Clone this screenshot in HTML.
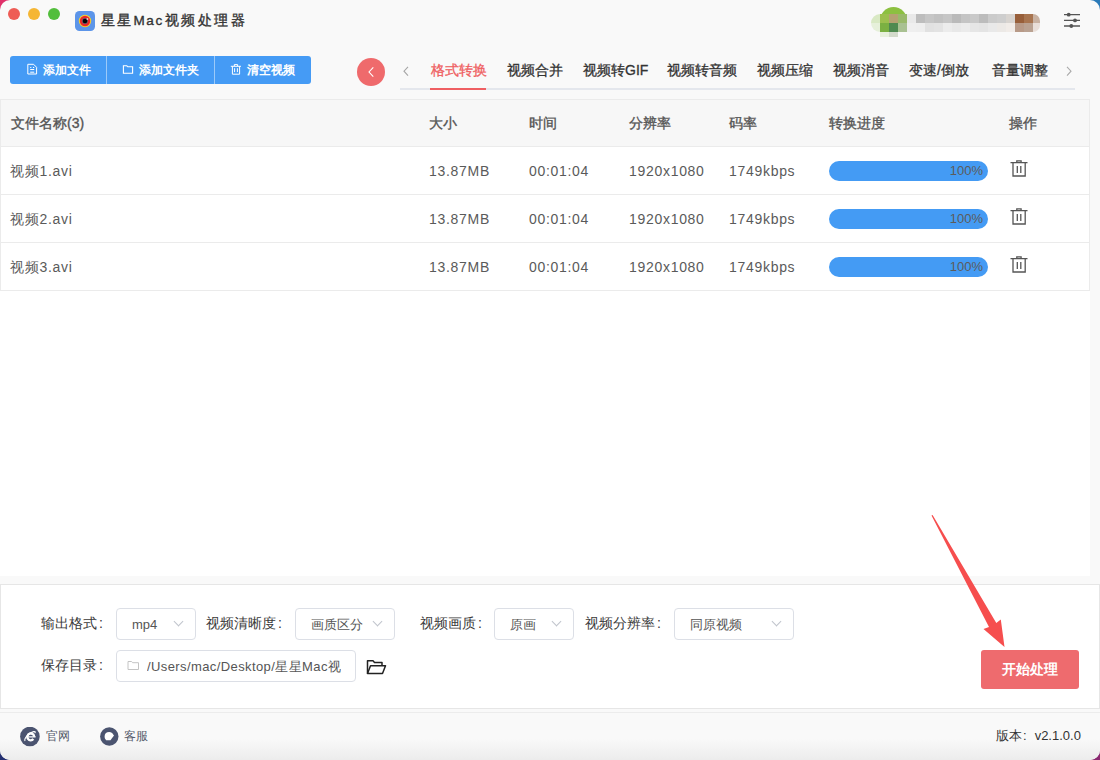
<!DOCTYPE html>
<html><head><meta charset="utf-8">
<style>
*{box-sizing:border-box;margin:0;padding:0}
html,body{width:1100px;height:760px;overflow:hidden}
body{font-family:"Liberation Sans",sans-serif;color:#333;position:relative;background:#fff}
.corner{position:absolute;width:20px;height:20px}
.win{position:absolute;left:0;top:0;width:1100px;height:760px;background:#f9f9f9;border-radius:10px;overflow:hidden}
.abs{position:absolute}
.tl{position:absolute;top:8px;width:12px;height:12px;border-radius:50%}
.title{position:absolute;left:100.5px;top:11px;font-size:13.5px;color:#333;letter-spacing:2.5px;line-height:20px;-webkit-text-stroke:0.35px #333}
.btns{position:absolute;left:10px;top:56px;width:301px;height:28px;background:#459bf5;border-radius:3px;color:#fff;font-size:12px;font-weight:bold}
.btns .sep{position:absolute;top:0;width:1px;height:28px;background:#9ccaf9}
.btns .t{position:absolute;top:0;line-height:28px}
.btns svg{position:absolute}
.tabs{position:absolute;top:60px;font-size:14px;line-height:20px;color:#333;-webkit-text-stroke:0.3px #333}
.tabline{position:absolute;left:400px;top:88px;width:675px;height:2px;background:#e4e7ed}
.main{position:absolute;left:0;top:99px;width:1090px;height:477px;background:#fff}
.table{position:absolute;left:0;top:99px;width:1090px;height:192px;border:1px solid #ebebeb}
.hdr{position:absolute;left:0;top:0;width:1088px;height:47px;background:#f7f7f7;border-bottom:1px solid #ebebeb}
.row{position:absolute;left:0;width:1088px;height:48px;border-bottom:1px solid #ebebeb;background:#fff}
.cell{position:absolute;font-size:14px;line-height:20px;color:#5a5a5a}
.hdr .cell{color:#555;top:13px;-webkit-text-stroke:0.35px #555}
.row .cell{top:14px;letter-spacing:0.7px}
.bar{position:absolute;left:828px;top:14px;width:159px;height:20px;border-radius:10px;background:#449bf4;color:#5c5c5c;font-size:13px;line-height:20px;text-align:right;padding-right:5px}
.trash{position:absolute;left:1009px;top:11px}
.panel{position:absolute;left:0;top:584px;width:1100px;height:125px;background:#fff;border:1px solid #e6e6e6}
.lbl{position:absolute;font-size:14px;color:#3a3a3a;line-height:20px}
.lbl b{font-weight:normal;display:inline-block;margin-left:2px}
.sel{position:absolute;height:32px;border:1px solid #dcdfe6;border-radius:4px;background:#fff;font-size:13px;color:#555;line-height:31px;white-space:nowrap;overflow:hidden}
.chev{position:absolute;top:9px;width:7px;height:7px;border-right:1px solid #c0c4cc;border-bottom:1px solid #c0c4cc;transform:rotate(45deg)}
.footer{position:absolute;left:0;top:712px;width:1100px;height:48px;background:linear-gradient(#f9f9f9,#f9f9f9 55%,#ececec);border-top:1px solid #ececec}
.start{position:absolute;left:981px;top:650px;width:98px;height:39px;background:#ee6b6e;border-radius:3px;color:#fff;font-size:14px;font-weight:bold;text-align:center;line-height:39px}
.mz{position:absolute;width:9px;height:9px}
</style></head><body>
<div class="corner" style="left:0;top:0;background:#e0306a"></div>
<div class="corner" style="right:0;top:0;background:#2a7ab8"></div>
<div class="corner" style="left:0;bottom:0;background:#243070"></div>
<div class="corner" style="right:0;bottom:0;background:#8a2870"></div>
<div class="win">
  <div class="tl" style="left:8px;background:#ee5c55"></div>
  <div class="tl" style="left:28px;background:#f5b634"></div>
  <div class="tl" style="left:48px;background:#52be3c"></div>
  <!-- app icon -->
  <svg class="abs" style="left:75px;top:11px" width="20" height="20" viewBox="0 0 20 20">
    <rect x="0" y="0" width="20" height="20" rx="4.5" fill="#5c95e9"/>
    <circle cx="10" cy="10" r="6.2" fill="#f3d22b"/>
    <circle cx="10" cy="10" r="5.2" fill="#e8262a"/>
    <circle cx="10" cy="10" r="2.9" fill="#5a6070"/>
    <circle cx="10" cy="10" r="2.3" fill="#050505"/>
    <circle cx="12.4" cy="8" r="0.9" fill="#f4c8c8"/>
  </svg>
  <div class="title">星星<span style="letter-spacing:1.6px">Ma</span>c视频处理器</div>

  <!-- mosaic avatar -->
  <div class="abs" style="left:871px;top:7px;width:170px;height:32px;overflow:visible">
    <div class="abs" style="left:9px;top:0;width:27px;height:14px;border-radius:14px 14px 0 0;background:#8cc040"></div>
    <div class="abs" style="left:0;top:7px;width:18px;height:18px;border-radius:9px 0 0 9px;overflow:hidden">
      <div class="abs" style="left:0;top:0;width:9px;height:9px;background:#d9e9c4"></div>
      <div class="abs" style="left:0;top:9px;width:9px;height:9px;background:#e6f0da"></div>
    </div>
  </div>
  <div class="mz" style="left:880px;top:14px;background:#9cbf4e"></div>
  <div class="mz" style="left:889px;top:14px;background:#b4a272"></div>
  <div class="mz" style="left:898px;top:14px;background:#99b96a"></div>
  <div class="mz" style="left:907px;top:14px;background:#e9e9e9"></div>
  <div class="mz" style="left:916px;top:14px;background:#bdbdbd"></div>
  <div class="mz" style="left:925px;top:14px;background:#c6c6c6"></div>
  <div class="mz" style="left:934px;top:14px;background:#c1c1c1"></div>
  <div class="mz" style="left:943px;top:14px;background:#c6c6c6"></div>
  <div class="mz" style="left:952px;top:14px;background:#bababa"></div>
  <div class="mz" style="left:961px;top:14px;background:#c4c4c4"></div>
  <div class="mz" style="left:970px;top:14px;background:#c9c9c9"></div>
  <div class="mz" style="left:979px;top:14px;background:#bcbcbc"></div>
  <div class="mz" style="left:988px;top:14px;background:#cbcbcb"></div>
  <div class="mz" style="left:997px;top:14px;background:#cecece"></div>
  <div class="mz" style="left:1006px;top:14px;background:#d8d4d0"></div>
  <div class="mz" style="left:1015px;top:14px;background:#985f3a"></div>
  <div class="mz" style="left:1024px;top:14px;background:#a87550"></div>
  <div class="mz" style="left:880px;top:23px;background:#7bb042"></div>
  <div class="mz" style="left:889px;top:23px;background:#4f8a50"></div>
  <div class="mz" style="left:898px;top:23px;background:#a9c192"></div>
  <div class="mz" style="left:907px;top:23px;background:#efefef"></div>
  <div class="mz" style="left:916px;top:23px;background:#eeeeee"></div>
  <div class="mz" style="left:925px;top:23px;background:#e1e1e1"></div>
  <div class="mz" style="left:934px;top:23px;background:#e3e3e3"></div>
  <div class="mz" style="left:943px;top:23px;background:#ececec"></div>
  <div class="mz" style="left:952px;top:23px;background:#e8e8e8"></div>
  <div class="mz" style="left:961px;top:23px;background:#ebebeb"></div>
  <div class="mz" style="left:970px;top:23px;background:#e6e6e6"></div>
  <div class="mz" style="left:979px;top:23px;background:#e4e4e4"></div>
  <div class="mz" style="left:988px;top:23px;background:#e9e9e9"></div>
  <div class="mz" style="left:997px;top:23px;background:#ece9e6"></div>
  <div class="mz" style="left:1006px;top:23px;background:#f1ece8"></div>
  <div class="mz" style="left:1015px;top:23px;background:#b89a88"></div>
  <div class="mz" style="left:1024px;top:23px;background:#baa292"></div>
  <div class="abs" style="left:1033px;top:14px;width:7px;height:18px;border-radius:0 9px 9px 0;overflow:hidden">
    <div class="abs" style="left:0;top:0;width:7px;height:9px;background:#c9b2a2"></div>
    <div class="abs" style="left:0;top:9px;width:7px;height:9px;background:#e9dfd9"></div>
  </div>
  <div class="mz" style="left:880px;top:32px;height:5px;background:#e8f0dd"></div>
  <div class="mz" style="left:889px;top:32px;height:5px;background:#d3dacb"></div>

  <!-- settings icon -->
  <svg class="abs" style="left:1062px;top:10px" width="20" height="20" viewBox="0 0 20 20">
    <g stroke="#555" stroke-width="1.3" fill="#555">
      <line x1="2" y1="4.7" x2="18" y2="4.7"/>
      <line x1="2" y1="10.4" x2="18" y2="10.4"/>
      <line x1="2" y1="16" x2="18" y2="16"/>
      <circle cx="6.7" cy="4.7" r="1.9" stroke="none"/>
      <circle cx="13" cy="10.4" r="1.9" stroke="none"/>
      <circle cx="9.3" cy="16" r="1.9" stroke="none"/>
    </g>
  </svg>

  <div class="btns">
    <div class="sep" style="left:96px"></div>
    <div class="sep" style="left:204px"></div>
    <svg style="left:16px;top:7px" width="12" height="12" viewBox="0 0 12 12" fill="none" stroke="#fff" stroke-width="1">
      <path d="M1.8 1.3 H7.6 L10.6 4.3 V11 H1.8 Z"/>
      <path d="M4.2 4.5 H5.3 M7 4.5 H8.2 M4.2 6.5 H8.2 M4.2 9.2 H8.2"/>
    </svg>
    <div class="t" style="left:33px">添加文件</div>
    <svg style="left:112px;top:8px" width="12" height="12" viewBox="0 0 12 12" fill="none" stroke="#fff" stroke-width="1.1">
      <path d="M1.4 1.8 H4.8 L5.8 2.8 H10.6 V9.2 H1.4 Z"/>
    </svg>
    <div class="t" style="left:129px">添加文件夹</div>
    <svg style="left:220px;top:7px" width="12" height="12" viewBox="0 0 12 12" fill="none" stroke="#fff" stroke-width="1">
      <path d="M0.8 3.3 H11"/>
      <path d="M4.3 3.3 V1.6 H7.6 V3.3"/>
      <path d="M2.4 3.3 V11.2 H9.6 V3.3"/>
      <path d="M4.6 5.2 V9.1 M7.4 5.2 V9.1"/>
    </svg>
    <div class="t" style="left:237px">清空视频</div>
  </div>

  <svg class="abs" style="left:357px;top:58px" width="28" height="28" viewBox="0 0 28 28">
    <circle cx="14" cy="14" r="14" fill="#ef6a6c"/>
    <path d="M16.3 9.3 L12 14 L16.3 18.7" stroke="#fff" stroke-width="1.1" fill="none"/>
  </svg>
  <svg class="abs" style="left:400px;top:64px" width="12" height="14" viewBox="0 0 12 14">
    <path d="M8 2.8 L4 7.2 L8 11.6" stroke="#a6a6a6" stroke-width="1.1" fill="none"/>
  </svg>

  <div class="tabs" style="left:431px;color:#ef5f62;-webkit-text-stroke:0.3px #ef5f62">格式转换</div>
  <div class="tabs" style="left:507px">视频合并</div>
  <div class="tabs" style="left:583px">视频转GIF</div>
  <div class="tabs" style="left:667px">视频转音频</div>
  <div class="tabs" style="left:757px">视频压缩</div>
  <div class="tabs" style="left:833px">视频消音</div>
  <div class="tabs" style="left:909px">变速/倒放</div>
  <div class="tabs" style="left:992px">音量调整</div>
  <svg class="abs" style="left:1063px;top:64px" width="12" height="14" viewBox="0 0 12 14">
    <path d="M4 2.8 L8 7.2 L4 11.6" stroke="#aaa" stroke-width="1.1" fill="none"/>
  </svg>
  <div class="tabline"></div>
  <div class="abs" style="left:430px;top:88px;width:56px;height:2px;background:#ef5f62"></div>

  <div class="main"></div>
  <div class="table">
    <div class="hdr">
      <div class="cell" style="left:10px">文件名称(3)</div>
      <div class="cell" style="left:428px">大小</div>
      <div class="cell" style="left:528px">时间</div>
      <div class="cell" style="left:628px">分辨率</div>
      <div class="cell" style="left:728px">码率</div>
      <div class="cell" style="left:828px">转换进度</div>
      <div class="cell" style="left:1008px">操作</div>
    </div>
    <div class="row" style="top:47px">
      <div class="cell" style="left:9px">视频1.avi</div>
      <div class="cell" style="left:428px">13.87MB</div>
      <div class="cell" style="left:528px">00:01:04</div>
      <div class="cell" style="left:628px">1920x1080</div>
      <div class="cell" style="left:728px">1749kbps</div>
      <div class="bar">100%</div>
      <svg class="trash" width="20" height="20" viewBox="0 0 20 20" fill="none" stroke="#555" stroke-width="1.3"><path d="M0.5 4.6 H17.5 M6.8 4.6 V2.9 H11.1 V4.6 M3 4.6 V18 H15.2 V4.6 M7.3 8 V14.9 M10.8 8 V14.9"/></svg>
    </div>
    <div class="row" style="top:95px">
      <div class="cell" style="left:9px">视频2.avi</div>
      <div class="cell" style="left:428px">13.87MB</div>
      <div class="cell" style="left:528px">00:01:04</div>
      <div class="cell" style="left:628px">1920x1080</div>
      <div class="cell" style="left:728px">1749kbps</div>
      <div class="bar">100%</div>
      <svg class="trash" width="20" height="20" viewBox="0 0 20 20" fill="none" stroke="#555" stroke-width="1.3"><path d="M0.5 4.6 H17.5 M6.8 4.6 V2.9 H11.1 V4.6 M3 4.6 V18 H15.2 V4.6 M7.3 8 V14.9 M10.8 8 V14.9"/></svg>
    </div>
    <div class="row" style="top:143px">
      <div class="cell" style="left:9px">视频3.avi</div>
      <div class="cell" style="left:428px">13.87MB</div>
      <div class="cell" style="left:528px">00:01:04</div>
      <div class="cell" style="left:628px">1920x1080</div>
      <div class="cell" style="left:728px">1749kbps</div>
      <div class="bar">100%</div>
      <svg class="trash" width="20" height="20" viewBox="0 0 20 20" fill="none" stroke="#555" stroke-width="1.3"><path d="M0.5 4.6 H17.5 M6.8 4.6 V2.9 H11.1 V4.6 M3 4.6 V18 H15.2 V4.6 M7.3 8 V14.9 M10.8 8 V14.9"/></svg>
    </div>
  </div>

  <div class="panel">
    <div class="lbl" style="left:40px;top:28px">输出格式<b>:</b></div>
    <div class="sel" style="left:115px;top:23px;width:80px;padding-left:15px">mp4<i class="chev" style="left:58px"></i></div>
    <div class="lbl" style="left:205px;top:28px">视频清晰度<b>:</b></div>
    <div class="sel" style="left:294px;top:23px;width:100px;padding-left:15px">画质区分<i class="chev" style="left:78px"></i></div>
    <div class="lbl" style="left:419px;top:28px">视频画质<b>:</b></div>
    <div class="sel" style="left:493px;top:23px;width:80px;padding-left:15px">原画<i class="chev" style="left:58px"></i></div>
    <div class="lbl" style="left:584px;top:28px">视频分辨率<b>:</b></div>
    <div class="sel" style="left:673px;top:23px;width:120px;padding-left:15px">同原视频<i class="chev" style="left:98px"></i></div>
    <div class="lbl" style="left:40px;top:70px">保存目录<b>:</b></div>
    <div class="sel" style="left:115px;top:65px;width:240px;"><span class="abs" style="left:30px;top:0;width:194px;overflow:hidden;letter-spacing:0.4px">/Users/mac/Desktop/星星Mac视频处理器</span>
      <svg class="abs" style="left:10px;top:9px" width="13" height="12" viewBox="0 0 13 12" fill="none" stroke="#c4c4c4" stroke-width="1"><path d="M1 1.5 H4.6 L5.6 2.7 H11.5 V9.5 H1 Z"/></svg>
    </div>
    <svg class="abs" style="left:364px;top:73px" width="22" height="18" viewBox="0 0 22 18" fill="none" stroke="#222" stroke-width="1.5" stroke-linejoin="round">
      <path d="M2.5 15.5 V2.8 H8 L9.5 4.5 H17 V7.5"/>
      <path d="M2.5 15.5 L5.5 7.8 H20.5 L17.5 15.5 Z"/>
    </svg>
  </div>
  <div class="start">开始处理</div>

  <div class="footer">
    <svg class="abs" style="left:20px;top:14px" width="20" height="20" viewBox="0 0 20 20">
      <circle cx="9.9" cy="9.5" r="9.8" fill="#4b5470"/>
      <g fill="none" stroke="#fff">
      <path d="M14.2 9.7 A3.4 3.4 0 1 0 13.4 12.1" stroke-width="2.3"/>
      <path d="M8.2 9.8 H15.6" stroke-width="1.3"/>
      <path d="M5 14 C3.8 11.5 8.5 5.8 13.6 4.6 C15.4 4.2 15.8 5 14.6 6.2" stroke-width="1.1"/>
      </g>
    </svg>
    <div class="lbl" style="left:46px;top:13px;font-size:12px;color:#555b6b">官网</div>
    <svg class="abs" style="left:100px;top:14px" width="20" height="20" viewBox="0 0 20 20">
      <circle cx="9.3" cy="9.5" r="9.2" fill="#4b5470"/>
      <path d="M6.2 13.2 C5 12 4.6 10.8 4.6 9.2 C4.6 6.6 6.6 5 9.2 5 C11.2 5 12.6 6 13.2 7.4 L14 8.4 L11 12.4 L10.5 13.2 Z" fill="#fff"/>
    </svg>
    <div class="lbl" style="left:124px;top:13px;font-size:12px;color:#555b6b">客服</div>
    <div class="lbl" style="left:996px;top:13px;font-size:13px;color:#333">版本<span style="display:inline-block;margin-left:1px;margin-right:8px">:</span>v2.1.0.0</div>
  </div>
  <svg class="abs" style="left:0;top:0" width="1100" height="760">
    <polygon points="931.5,515.5 989,627 983.5,629 1004.5,647 1000.8,619.4 996.3,623 932.6,515" fill="#f64e4e"/>
  </svg>
</div>
</body></html>
